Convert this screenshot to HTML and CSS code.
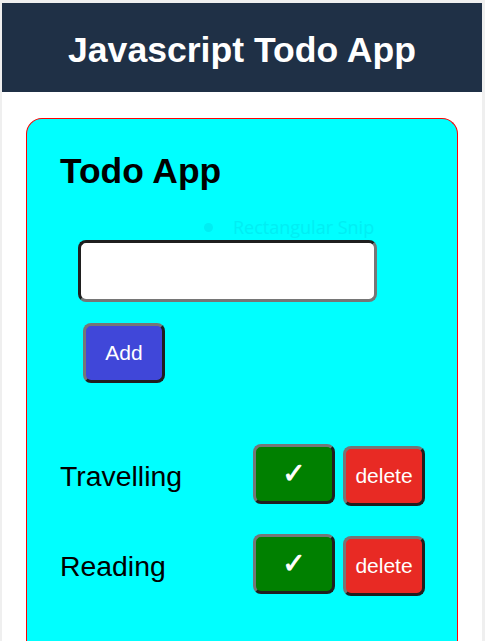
FILE: index.html
```html
<!DOCTYPE html>
<html lang="en">
<head>
<meta charset="utf-8">
<title>Javascript Todo App</title>
<link rel="stylesheet" href="styles.css">
</head>
<body>
<div class="page">
  <header class="topbar">
    <h1 class="title">Javascript Todo App</h1>
  </header>
  <main class="content">
    <section class="card">
      <h2 class="card-title">Todo App</h2>
      <div class="snip-ghost"><span class="snip-dot"></span><span class="snip-text">Rectangular Snip</span></div>
      <form class="todo-form">
        <input class="todo-input" type="text">
        <button class="btn btn-add" type="button">Add</button>
      </form>
      <ul class="todo-list">
        <li class="todo-item">
          <span class="todo-text">Travelling</span>
          <div class="todo-actions">
            <button class="btn btn-done" type="button">✓</button>
            <button class="btn btn-delete" type="button">delete</button>
          </div>
        </li>
        <li class="todo-item">
          <span class="todo-text">Reading</span>
          <div class="todo-actions">
            <button class="btn btn-done" type="button">✓</button>
            <button class="btn btn-delete" type="button">delete</button>
          </div>
        </li>
      </ul>
    </section>
  </main>
</div>
</body>
</html>
```
FILE: styles.css
```css
* { box-sizing: border-box; }
html, body { height: 100%; }
body {
  margin: 0;
  padding: 3px 3px 0 2px;
  background: #efefef;
  font-family: "Liberation Sans", Arial, sans-serif;
  overflow: hidden;
}
.page {
  background: #ffffff;
  height: 100%;
  overflow: hidden;
}
.topbar {
  height: 89px;
  background: #1f3046;
  display: flex;
  align-items: center;
  justify-content: center;
}
.title {
  margin: 0;
  color: #ffffff;
  font-size: 35.6px;
  font-weight: bold;
  line-height: 40px;
  position: relative;
  top: 2px;
}
.content {
  padding: 26px 24px 0 24px;
}
.card {
  position: relative;
  width: 432px;
  height: 523px;
  background: #00ffff;
  border: 1px solid #ff0000;
  border-bottom: none;
  border-radius: 16px 16px 0 0;
  padding: 32px 32px 0 33px;
}
.card-title {
  margin: 0;
  font-size: 35.4px;
  line-height: 40px;
  font-weight: bold;
  color: #000;
}
.snip-ghost {
  position: absolute;
  left: 177px;
  top: 96px;
  display: flex;
  align-items: center;
  gap: 20px;
  color: #00eef3;
  font-family: "Open Sans", sans-serif;
  font-size: 18px;
}
.snip-dot {
  width: 9px;
  height: 9px;
  border-radius: 50%;
  background: #00eef3;
}
.todo-form {
  margin: 49px 0 0 18px;
  display: flex;
  flex-direction: column;
  align-items: flex-start;
}
.todo-input {
  width: 299px;
  height: 62px;
  border: 3px solid;
  border-color: #1f1f1f #767676 #767676 #1f1f1f;
  border-radius: 8px;
  background: #ffffff;
  padding: 0 10px;
  font-size: 20px;
  outline: none;
}
.btn {
  width: 82px;
  height: 60px;
  border: 3px solid;
  border-color: #767676 #1f1f1f #1f1f1f #767676;
  border-radius: 8px;
  color: #ffffff;
  font-family: "Liberation Sans", Arial, sans-serif;
  font-size: 21px;
  padding: 0;
  cursor: pointer;
}
.btn-add {
  margin: 21px 0 0 5px;
  background: #4047d9;
}
.todo-list {
  list-style: none;
  margin: 62px 0 0 0;
  padding: 0;
  display: flex;
  flex-direction: column;
  gap: 30px;
}
.todo-item {
  display: flex;
  align-items: center;
  justify-content: space-between;
  height: 60px;
}
.todo-text {
  font-size: 28.4px;
  color: #000;
  padding-top: 2px;
}
.todo-actions {
  display: flex;
  align-items: flex-start;
  gap: 8px;
}
.btn-done {
  background: #008000;
  font-family: "DejaVu Sans", sans-serif;
  font-size: 28px;
  line-height: 1;
  -webkit-text-stroke: 0.9px #ffffff;
}
.btn-delete {
  background: #e82a24;
  margin-top: 2px;
}
```
